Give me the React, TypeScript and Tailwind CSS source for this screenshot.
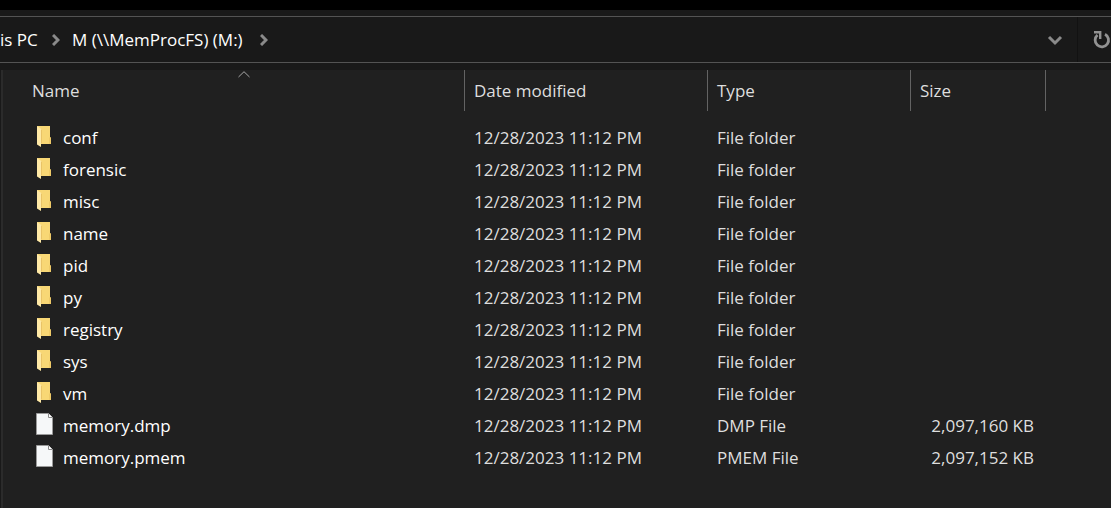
type Entry = { name: string; modified: string; type: string; size?: string };

const modified = "12/28/2023 11:12 PM";

const entries: Entry[] = [
  ...["conf", "forensic", "misc", "name", "pid", "py", "registry", "sys", "vm"].map((name) => ({
    name,
    modified,
    type: "File folder",
  })),
  { name: "memory.dmp", modified, type: "DMP File", size: "2,097,160 KB" },
  { name: "memory.pmem", modified, type: "PMEM File", size: "2,097,152 KB" },
];

function FolderIcon() {
  return (
    <svg width="17" height="22" viewBox="0 0 17 22" aria-hidden="true">
      <path d="M1 0h13v11l1 1v6H4z" fill="#f8d775" />
      <path d="M13 11.5h2V18h-2z" fill="#efca68" />
      <path d="M1 0l5 3.5V17l-1 1v3L1 18.5z" fill="#ffe9a6" />
      <path d="M5 3l1 1v13l-1 1z" fill="#e9c367" />
    </svg>
  );
}

function FileIcon() {
  return (
    <svg width="17" height="24" viewBox="0 0 17 24" aria-hidden="true">
      <path d="M.5.5h12l4 4v17H.5z" fill="#f6f8f9" stroke="#9a9a9a" />
      <path d="M12.5.5v4h4" fill="#fff" stroke="#8a8a8a" />
    </svg>
  );
}

function Chevron({ down = false }: { down?: boolean }) {
  return down ? (
    <svg width="16" height="12" viewBox="0 0 16 12" fill="none" stroke="#8a8a8a" strokeWidth="3" aria-hidden="true">
      <path d="M2 3l6 6 6-6" />
    </svg>
  ) : (
    <svg width="8" height="12" viewBox="0 0 8 12" fill="none" stroke="#8a8a8a" strokeWidth="3" aria-hidden="true">
      <path d="M1 1l5 5-5 5" />
    </svg>
  );
}

function RefreshIcon() {
  return (
    <svg width="18" height="18" viewBox="0 0 18 18" fill="none" stroke="#929292" aria-hidden="true">
      <path d="M12 3.2A6.7 6.7 0 1 1 4.5 4" strokeWidth="2.8" />
      <path d="M1 1.2h6.2V8" strokeWidth="2.4" />
    </svg>
  );
}

const headCell = "border-r border-[#636363] p-0 pl-[9px] pt-px text-left font-normal";

export default function App() {
  return (
    <div className="flex min-h-screen flex-col overflow-hidden bg-[#191919] font-['Open_Sans','Noto_Sans',sans-serif] text-[17px] leading-6 text-[#dedede]">
      <div className="h-[10px] bg-black" />
      <header className="mt-[6px] flex h-[47px] items-stretch overflow-hidden border-y border-[#535353]">
        <nav aria-label="Path" className="flex flex-1 items-center whitespace-nowrap text-white">
          <a href="#this-pc" className="w-[39px]">
            is PC
          </a>
          <span className="ml-[13px]">
            <Chevron />
          </span>
          <a href="#drive-m" className="ml-3 w-[175px]">
            M (\\MemProcFS) (M:)
          </a>
          <span className="ml-[13px]">
            <Chevron />
          </span>
        </nav>
        <button type="button" aria-label="Previous locations" className="flex w-[44px] items-center justify-center">
          <Chevron down />
        </button>
        <button
          type="button"
          aria-label="Refresh"
          className="flex w-[34px] shrink-0 items-center border-l border-[#121212] pl-[15px]"
        >
          <span className="shrink-0">
            <RefreshIcon />
          </span>
        </button>
      </header>
      <main className="ml-px mt-[7px] flex-1 border-l-2 border-[#2b2b2b] bg-[#202020]">
        <table className="w-full table-fixed border-separate border-spacing-0">
          <colgroup>
            <col className="w-[462px]" />
            <col className="w-[243px]" />
            <col className="w-[203px]" />
            <col className="w-[135px]" />
            <col />
          </colgroup>
          <thead>
            <tr className="h-[41px]">
              <th scope="col" aria-sort="ascending" className="relative border-r border-[#636363] p-0 pl-[29px] pt-px text-left font-normal">
                Name
                <svg
                  className="absolute left-[235px] top-px"
                  width="12"
                  height="7"
                  viewBox="0 0 12 7"
                  fill="none"
                  stroke="#a8a8a8"
                  aria-hidden="true"
                >
                  <path d="M.5 6L6 .7 11.500 6" />
                </svg>
              </th>
              <th scope="col" className={headCell}>Date modified</th>
              <th scope="col" className={headCell}>Type</th>
              <th scope="col" className={headCell}>Size</th>
              <td />
            </tr>
          </thead>
          <tbody className="before:block before:h-[10px]">
            {entries.map((entry) => (
              <tr key={entry.name} className="h-8">
                <td className="p-0 pl-[33px] pt-[2px]">
                  <div className="flex h-6 items-center text-white">
                    <span className="flex w-[27px] items-center pb-[2px]">{entry.size ? <FileIcon /> : <FolderIcon />}</span>
                    {entry.name}
                  </div>
                </td>
                <td className="p-0 pl-[9px] pt-[2px]">{entry.modified}</td>
                <td className="p-0 pl-[9px] pt-[2px]">{entry.type}</td>
                <td className="p-0 pr-3 pt-[2px] text-right">{entry.size}</td>
                <td />
              </tr>
            ))}
          </tbody>
        </table>
      </main>
    </div>
  );
}
